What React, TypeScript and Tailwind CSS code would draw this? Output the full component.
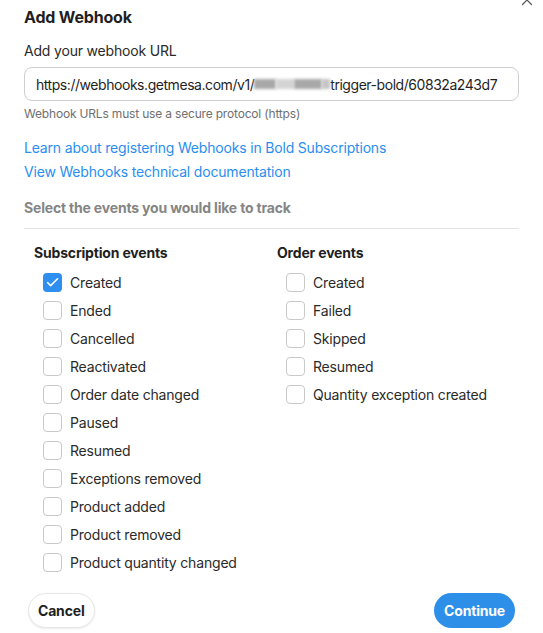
import { Check, X } from "lucide-react";

const SUB_EVENTS = [
  "Created",
  "Ended",
  "Cancelled",
  "Reactivated",
  "Order date changed",
  "Paused",
  "Resumed",
  "Exceptions removed",
  "Product added",
  "Product removed",
  "Product quantity changed",
];

const ORDER_EVENTS = ["Created", "Failed", "Skipped", "Resumed", "Quantity exception created"];

function Box({ checked }: { checked?: boolean }) {
  return checked ? (
    <span className="flex h-[19px] w-[19px] shrink-0 items-center justify-center rounded-[4px] bg-[#2e8fef]">
      <Check className="h-[15px] w-[15px] text-white" strokeWidth={2.5} />
    </span>
  ) : (
    <span className="h-[19px] w-[19px] shrink-0 rounded-[4px] border border-[#c9c9c9] bg-white" />
  );
}

function EventColumn({ title, items, checked = [] }: { title: string; items: string[]; checked?: string[] }) {
  return (
    <div>
      <p className="text-[14px] font-bold leading-[20px] text-[#1f1f1f]">{title}</p>
      <div className="mt-[10px] flex flex-col gap-[9px] pl-[9px]">
        {items.map((it) => (
          <label key={it} className="flex h-[19px] items-center gap-[8px] text-[14px] text-[#2a2a2a]">
            <Box checked={checked.includes(it)} />
            <span>{it}</span>
          </label>
        ))}
      </div>
    </div>
  );
}

export default function App() {
  return (
    <div className="relative h-[633px] w-[543px] overflow-hidden bg-white font-['Inter',_'Liberation_Sans',_sans-serif] tracking-[-0.18px] antialiased">
      <X className="absolute right-[7px] top-[-9px] h-[18px] w-[18px] text-[#555]" strokeWidth={1.6} />
      <div className="px-[24px] pt-[6px]">
        <h1 className="text-[16px] font-bold leading-[22px] text-[#1f1f1f]">Add Webhook</h1>

        <p className="mt-[13px] text-[14px] leading-[20px] text-[#2a2a2a]">Add your webhook URL</p>
        <div className="mt-[6px] flex h-[34px] items-center overflow-hidden whitespace-nowrap rounded-[8px] border border-[#cfcfcf] px-[11px] text-[14px] tracking-[-0.45px] text-[#1f1f1f]">
          <span>https://webhooks.getmesa.com/v1/</span>
          <span className="flex h-[20px] shrink-0 items-center">
            <span className="h-[10px] w-[22px] bg-[#a8a8a8] blur-[1.5px]" />
            <span className="h-[10px] w-[18px] bg-[#d4d4d4] blur-[1.5px]" />
            <span className="h-[10px] w-[28px] bg-[#a8a8a8] blur-[1.5px]" />
            <span className="h-[10px] w-[8px] bg-[#c4c4c4] blur-[1.5px]" />
          </span>
          <span>trigger-bold/60832a243d7</span>
        </div>
        <p className="mt-[5px] text-[12px] leading-[16px] text-[#6f6f6f]">
          Webhook URLs must use a secure protocol (https)
        </p>

        <div className="mt-[16px] flex flex-col gap-[4px] text-[14px] leading-[20px] text-[#2a8ef0]">
          <a>Learn about registering Webhooks in Bold Subscriptions</a>
          <a>View Webhooks technical documentation</a>
        </div>

        <p className="mt-[16px] text-[14px] font-bold leading-[20px] text-[#858585]">
          Select the events you would like to track
        </p>
        <div className="mt-[10px] border-t border-[#e3e3e3]" />

        <div className="mt-[14px] grid grid-cols-[243px_1fr] pl-[10px]">
          <EventColumn title="Subscription events" items={SUB_EVENTS} checked={["Created"]} />
          <EventColumn title="Order events" items={ORDER_EVENTS} />
        </div>

        <div className="mt-[21px] flex items-center justify-between px-[4px]">
          <button className="h-[35px] rounded-full border border-[#e6e6e6] bg-white px-[9px] text-[14px] font-bold text-[#1f1f1f] shadow-[0_1px_2px_rgba(0,0,0,0.08)]">
            Cancel
          </button>
          <button className="h-[35px] rounded-full bg-[#2e8fe9] px-[10px] text-[14px] font-bold text-white">
            Continue
          </button>
        </div>
      </div>
    </div>
  );
}
